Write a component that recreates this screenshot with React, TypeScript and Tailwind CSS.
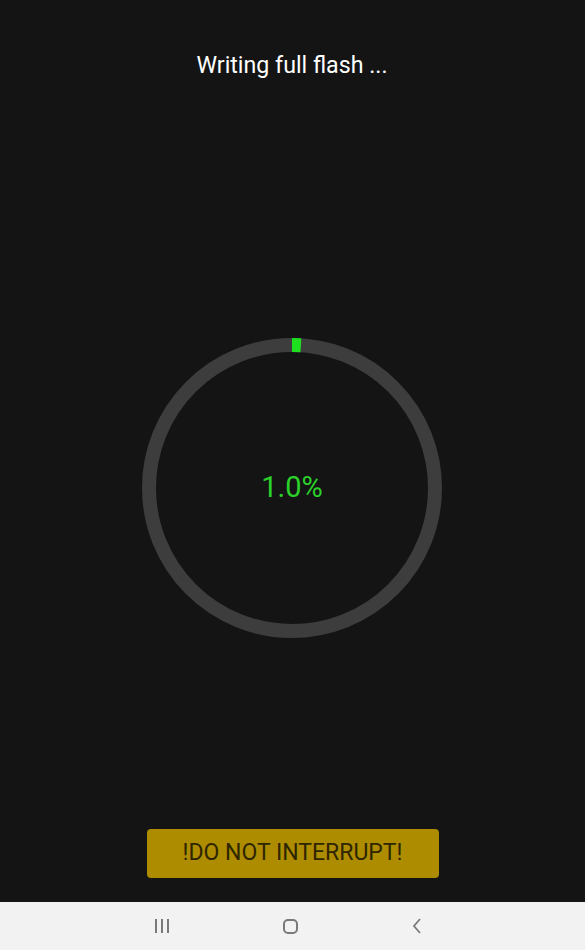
export default function App() {
  const progress = 1.0;
  const r = 143;
  const c = 2 * Math.PI * r;

  return (
    <div className="w-[585px] h-[950px] flex flex-col bg-[#141414] font-['Roboto',sans-serif]">
      {/* Main */}
      <div className="flex-1 flex flex-col items-center">
        <div className="mt-[50px] text-[23.2px] leading-[30px] text-white pr-[1px]">Writing full flash ...</div>

        <div className="relative mt-[258px] w-[300px] h-[300px] mr-[1px]">
          <svg width="300" height="300" viewBox="0 0 300 300">
            <circle cx="150" cy="150" r={r} fill="none" stroke="#3d3d3d" strokeWidth="14" />
            <circle
              cx="150"
              cy="150"
              r={r}
              fill="none"
              stroke="#1ee01e"
              strokeWidth="14"
              strokeDasharray={`${(c * progress) / 100} ${c}`}
              transform="rotate(-90 150 150)"
            />
          </svg>
          <div className="absolute inset-0 flex items-center justify-center text-[29px] text-[#2bd02b]">
            {progress.toFixed(1)}%
          </div>
        </div>

        <div className="mt-auto mb-[24px] w-[292px] h-[49px] rounded-[4px] bg-[#ae8c00] flex items-center justify-center text-[23px] text-[#2e2600]">
          !DO NOT INTERRUPT!
        </div>
      </div>

      {/* Nav bar */}
      <div className="h-[48px] bg-[#f2f2f2] flex items-center">
        <div className="ml-[155px] flex gap-[4px] h-[14px]">
          <div className="w-[2px] bg-[#7a7a7a]" />
          <div className="w-[2px] bg-[#7a7a7a]" />
          <div className="w-[2px] bg-[#7a7a7a]" />
        </div>
        <div className="ml-[114px] w-[15px] h-[15px] rounded-[5px] border-[2px] border-[#7a7a7a]" />
        <svg width="10" height="16" viewBox="0 0 10 16" className="ml-[114px]">
          <path d="M8 1 L2 8 L8 15" fill="none" stroke="#7a7a7a" strokeWidth="1.8" />
        </svg>
      </div>
    </div>
  );
}
